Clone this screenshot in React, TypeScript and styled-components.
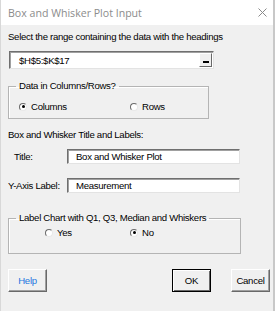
import React from "react"
import styled, { createGlobalStyle } from "styled-components"

const GlobalStyle = createGlobalStyle`
  html, body {
    margin: 0;
    padding: 0;
    background: #ffffff;
  }
  body {
    font-family: "Liberation Sans", Arial, sans-serif;
    font-size: 9.6px;
    letter-spacing: -0.3px;
    color: #000;
    white-space: nowrap;
  }
`

type RadioProps = {
  label: string
  checked?: boolean
  width?: number
}

const Radio: React.FC<RadioProps> = ({ label, checked, width }) => (
  <RadioItem $width={width}>
    <RadioCircle>{checked && <RadioDot />}</RadioCircle>
    <span>{label}</span>
  </RadioItem>
)

export default function App() {
  return (
    <>
      <GlobalStyle />
      <Window>
        <TitleBar>
          <TitleText>Box and Whisker Plot Input</TitleText>
          <CloseIcon width="9" height="9" viewBox="0 0 9 9">
            <path d="M0.5 0.5 L8.5 8.5 M8.5 0.5 L0.5 8.5" stroke="#8a8a8a" strokeWidth="1" />
          </CloseIcon>
        </TitleBar>
        <Body>
          <Caption>Select the range containing the data with the headings</Caption>
          <RangeBox>
            <span>$H$5:$K$17</span>
            <RefButton>
              <RefBar />
            </RefButton>
          </RangeBox>

          <Frame $width={201} $height={39} $top={11}>
            <Legend>Data in Columns/Rows?</Legend>
            <RadioRow $indent={10} $top={9}>
              <Radio label="Columns" checked width={111} />
              <Radio label="Rows" />
            </RadioRow>
          </Frame>

          <SectionLabel>Box and Whisker Title and Labels:</SectionLabel>

          <FieldRow $top={8}>
            <FieldLabel $indent={7}>Title:</FieldLabel>
            <TextBox>Box and Whisker Plot</TextBox>
          </FieldRow>
          <FieldRow $top={14}>
            <FieldLabel $indent={1}>Y-Axis Label:</FieldLabel>
            <TextBox>Measurement</TextBox>
          </FieldRow>

          <Frame $width={233} $height={42} $top={19}>
            <Legend>Label Chart with Q1, Q3, Median and Whiskers</Legend>
            <RadioRow $indent={36} $top={3}>
              <Radio label="Yes" width={85} />
              <Radio label="No" checked />
            </RadioRow>
          </Frame>

          <ButtonRow>
            <Button $link>Help</Button>
            <Spacer />
            <Button $default>OK</Button>
            <Button>Cancel</Button>
          </ButtonRow>
        </Body>
      </Window>
    </>
  )
}

/**
 * Styled components
 */

const Window = styled.div`
  display: flex;
  flex-direction: column;
  width: 275px;
  height: 311px;
  box-sizing: border-box;
  border-left: 1px solid #d8d8d8;
  border-right: 2px solid #c8c8c8;
  background: #f0f0f0;
  overflow: hidden;
`

const TitleBar = styled.div`
  display: flex;
  align-items: center;
  justify-content: space-between;
  height: 25px;
  padding: 0 6px 0 7px;
  background: #ffffff;
  flex-shrink: 0;
`

const TitleText = styled.span`
  font-family: "Open Sans", "Liberation Sans", sans-serif;
  font-size: 10.6px;
  letter-spacing: 0;
  color: #8c8c8c;
`

const CloseIcon = styled.svg`
  display: block;
`

const Body = styled.div`
  display: flex;
  flex-direction: column;
  align-items: flex-start;
  padding: 5px 0 0 6px;
`

const Caption = styled.div`
  height: 13px;
  line-height: 13px;
  margin-left: 1px;
`

const RangeBox = styled.div`
  display: flex;
  align-items: center;
  justify-content: space-between;
  box-sizing: border-box;
  width: 205px;
  height: 18px;
  margin: 8px 0 0 2px;
  padding: 0 1px 0 9px;
  background: #fff;
  border: 1px solid;
  border-color: #6f6f6f #e3e3e3 #e3e3e3 #6f6f6f;
  box-shadow: inset 1px 1px 0 #a0a0a0;
`

const RefButton = styled.div`
  display: flex;
  align-items: flex-end;
  justify-content: center;
  box-sizing: border-box;
  width: 13px;
  height: 14px;
  padding-bottom: 3px;
  background: #f0f0f0;
  border: 1px solid;
  border-color: #ffffff #696969 #696969 #ffffff;
`

const RefBar = styled.div`
  width: 6px;
  height: 2px;
  background: #000;
`

const Frame = styled.fieldset<{ $width: number; $height: number; $top: number }>`
  box-sizing: border-box;
  width: ${(p) => p.$width}px;
  height: ${(p) => p.$height}px;
  margin: ${(p) => p.$top}px 0 0 1px;
  padding: 0;
  border: 1px solid #b4b4b4;
  box-shadow: inset 1px 1px 0 #ffffff;
`

const Legend = styled.legend`
  margin-left: 7px;
  padding: 0 3px;
  line-height: 12px;
`

const RadioRow = styled.div<{ $indent: number; $top: number }>`
  display: flex;
  align-items: center;
  margin: ${(p) => p.$top}px 0 0 ${(p) => p.$indent}px;
`

const RadioItem = styled.div<{ $width?: number }>`
  display: flex;
  align-items: center;
  gap: 4px;
  width: ${(p) => (p.$width ? `${p.$width}px` : "auto")};
`

const RadioCircle = styled.span`
  display: flex;
  align-items: center;
  justify-content: center;
  box-sizing: border-box;
  width: 8px;
  height: 8px;
  border-radius: 50%;
  background: #ffffff;
  border: 1px solid;
  border-color: #6a6a6a #e8e8e8 #e8e8e8 #6a6a6a;
`

const RadioDot = styled.span`
  width: 3px;
  height: 3px;
  border-radius: 50%;
  background: #000;
`

const SectionLabel = styled.div`
  margin: 9px 0 0 1px;
  line-height: 13px;
`

const FieldRow = styled.div<{ $top: number }>`
  display: flex;
  align-items: center;
  margin-top: ${(p) => p.$top}px;
`

const FieldLabel = styled.span<{ $indent: number }>`
  width: ${(p) => 60 - p.$indent}px;
  padding-left: ${(p) => p.$indent}px;
`

const TextBox = styled.div`
  box-sizing: border-box;
  width: 173px;
  height: 15px;
  line-height: 13px;
  padding-left: 8px;
  background: #ffffff;
  border: 1px solid;
  border-color: #6f6f6f #e3e3e3 #e3e3e3 #6f6f6f;
  box-shadow: inset 1px 1px 0 #a0a0a0;
`

const ButtonRow = styled.div`
  display: flex;
  align-items: center;
  gap: 20px;
  width: 262px;
  margin: 15px 0 0 1px;
`

const Spacer = styled.div`
  flex: 1;
`

const Button = styled.div<{ $link?: boolean; $default?: boolean }>`
  display: flex;
  align-items: center;
  justify-content: center;
  box-sizing: border-box;
  width: 39px;
  height: 23px;
  background: #f0f0f0;
  color: ${(p) => (p.$link ? "#1f77e0" : "#000")};
  border: 1px solid;
  border-color: ${(p) =>
    p.$default ? "#000" : "#ffffff #696969 #696969 #ffffff"};
  box-shadow: ${(p) =>
    p.$default
      ? "inset 1px 1px 0 #ffffff, inset -1px -1px 0 #696969"
      : "inset -1px -1px 0 #a0a0a0"};
`
